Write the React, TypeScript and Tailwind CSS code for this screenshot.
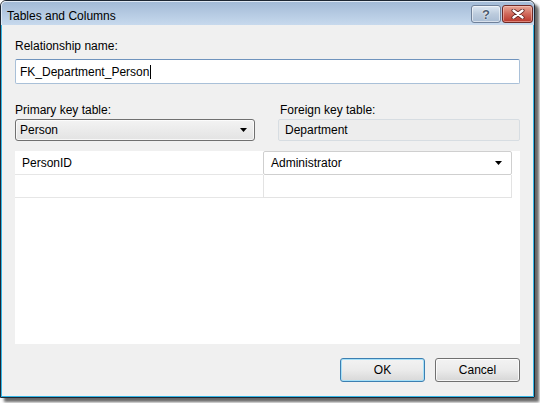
function Arrow() {
  return (
    <svg width="7" height="4" viewBox="0 0 7 4" className="shrink-0">
      <path d="M0 0H7L3.5 4Z" fill="#000" />
    </svg>
  );
}

function TitleBar() {
  return (
    <div className="h-[24px] flex items-start bg-gradient-to-b from-[#a3bbd7] to-[#c7d9ed] border-t border-l border-[#dfe9f4] rounded-t-[5px]">
      <div className="pl-[5px] pt-[7px] text-[12px] leading-[14px]">Tables and Columns</div>
      <div className="ml-auto flex gap-[1px] pt-[3px] pr-[1px]">
        <div className="w-[30px] h-[18px] rounded-[3px] border border-[#6f8099] bg-gradient-to-b from-[#dde7f2] via-[#bccbdd] to-[#a9bcd3] shadow-[inset_0_0_0_1px_rgba(255,255,255,0.55)] flex items-center justify-center">
          <span className="text-[13px] leading-[13px] font-bold text-[#4a5a6e] [text-shadow:0_0_1px_#fff,0_0_2px_#fff]">?</span>
        </div>
        <div className="w-[31px] h-[18px] rounded-[3px] border border-[#6e2a26] bg-gradient-to-b from-[#e7a898] via-[#d0685a] to-[#b9342a] shadow-[inset_0_0_0_1px_rgba(255,210,200,0.5)] flex items-center justify-center">
          <svg width="14" height="10" viewBox="0 0 14 10">
            <path d="M2.5 1.5L11.5 8.5M11.5 1.5L2.5 8.5" stroke="#5a1e1a" strokeWidth="4" strokeLinecap="round" />
            <path d="M2.5 1.5L11.5 8.5M11.5 1.5L2.5 8.5" stroke="#fff" strokeWidth="2.4" strokeLinecap="round" />
          </svg>
        </div>
      </div>
    </div>
  );
}

export default function App() {
  return (
    <div className="w-[540px] h-[403px] bg-white font-['Liberation_Sans',Arial,sans-serif] text-[12px] leading-[14px] text-black">
      <div className="w-[535px] h-[398px] flex flex-col border border-[#1d2733] rounded-t-[6px] shadow-[4px_4px_3px_rgba(0,0,0,0.6)] overflow-hidden">
        <TitleBar />
        <div className="flex-1 flex flex-col bg-[#f0f0f0] border-x border-b border-[#35b6e6] px-[13px] pt-[14px]">
          <div className="h-[14px]">Relationship name:</div>
          <div className="mt-[6px] h-[25px] flex items-center bg-white border border-[#a9c0d8] border-t-[#6f93bd] rounded-[2px] pl-[4px]">
            <span>FK_Department_Person</span>
            <span className="w-[1px] h-[14px] bg-black ml-[1px]" />
          </div>
          <div className="mt-[19px] flex gap-[23px]">
            <div className="w-[240px] flex flex-col">
              <div className="h-[14px]">Primary key table:</div>
              <div className="mt-[2px] h-[22px] flex items-center justify-between border border-[#707070] rounded-[3px] bg-gradient-to-b from-[#f3f3f3] to-[#e3e3e3] pl-[4px] pr-[7px] shadow-[inset_0_0_0_1px_rgba(255,255,255,0.7)]">
                <span>Person</span>
                <Arrow />
              </div>
            </div>
            <div className="flex-1 flex flex-col">
              <div className="h-[14px] pl-[2px]">Foreign key table:</div>
              <div className="mt-[2px] h-[22px] flex items-center border border-[#d7dde2] rounded-[2px] bg-[#ededed] pl-[6px]">
                Department
              </div>
            </div>
          </div>
          <div className="mt-[10px] h-[193px] bg-white flex flex-col">
            <div className="flex h-[24px]">
              <div className="w-[248px] border-b border-[#e6e6e6] flex items-center pl-[7px]">PersonID</div>
              <div className="w-[249px] border border-[#cfcfcf] rounded-[2px] flex items-center justify-between pl-[7px] pr-[9px]">
                <span>Administrator</span>
                <Arrow />
              </div>
            </div>
            <div className="flex h-[23px]">
              <div className="w-[248px] border-b border-[#e6e6e6]" />
              <div className="w-[249px] border-x border-b border-[#e3e3e3]" />
            </div>
          </div>
          <div className="mt-[14px] flex justify-end gap-[10px]">
            <div className="w-[85px] h-[24px] rounded-[3px] border border-[#3c7fb1] bg-gradient-to-b from-[#f3f3f3] via-[#ebebeb] to-[#d8d8d8] shadow-[inset_0_0_0_1px_#a6e0f8] flex items-center justify-center">
              OK
            </div>
            <div className="w-[85px] h-[24px] rounded-[3px] border border-[#707070] bg-gradient-to-b from-[#f3f3f3] via-[#ebebeb] to-[#d6d6d6] shadow-[inset_0_0_0_1px_rgba(255,255,255,0.75)] flex items-center justify-center">
              Cancel
            </div>
          </div>
        </div>
      </div>
    </div>
  );
}
